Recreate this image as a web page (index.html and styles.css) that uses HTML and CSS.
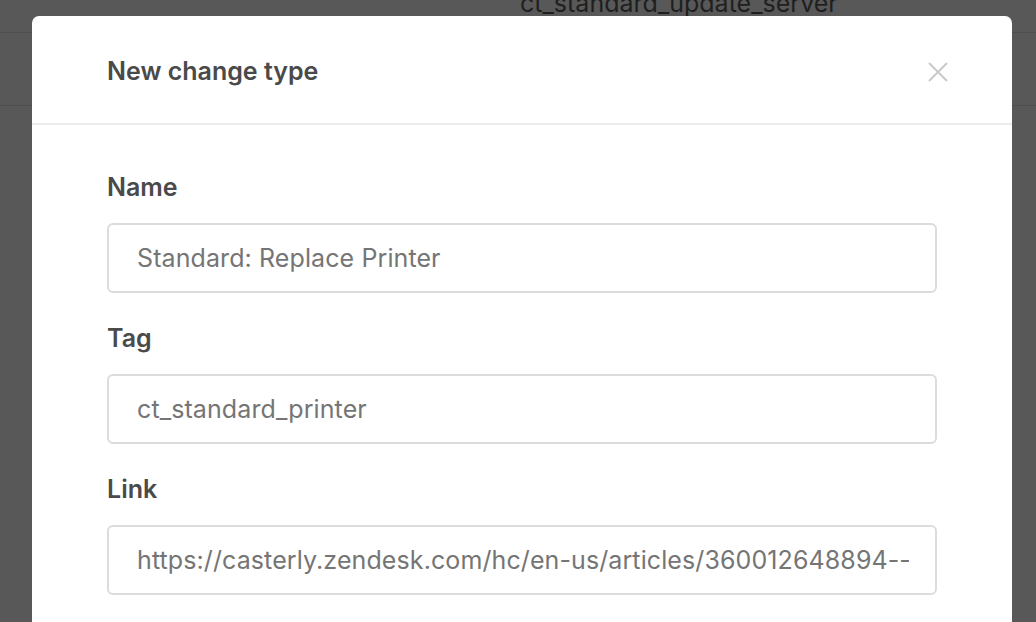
FILE: index.html
```html
<!DOCTYPE html>
<html>
<head>
<meta charset="utf-8">
<link rel="stylesheet" href="styles.css">
</head>
<body>
<div class="page">
  <div class="page-top"><span class="page-tag">ct_standard_update_server</span></div>
  <div class="page-row"></div>
</div>
<div class="modal">
  <div class="modal-header">
    <h2 class="modal-title">New change type</h2>
    <button class="modal-close" aria-label="Close">
      <svg width="20" height="20" viewBox="0 0 20 20"><path d="M1 1 L19 19 M19 1 L1 19" stroke="#c9c9c9" stroke-width="2" fill="none"/></svg>
    </button>
  </div>
  <div class="modal-body">
    <div class="field">
      <label class="field-label">Name</label>
      <div class="field-input"><span class="field-value">Standard: Replace Printer</span></div>
    </div>
    <div class="field">
      <label class="field-label">Tag</label>
      <div class="field-input"><span class="field-value">ct_standard_printer</span></div>
    </div>
    <div class="field">
      <label class="field-label">Link</label>
      <div class="field-input"><span class="field-value">https://casterly.zendesk.com/hc/en-us/articles/360012648894--Replace-Printer</span></div>
    </div>
  </div>
</div>
</body>
</html>
```
FILE: styles.css
```css
html, body {
  margin: 0;
  padding: 0;
  height: 100%;
  overflow: hidden;
}
body {
  background: #585858;
  font-family: Inter, "Liberation Sans", sans-serif;
}
.page-top {
  height: 32px;
  border-bottom: 1px solid #4e4e4e;
  display: flex;
  justify-content: flex-start;
  padding-left: 520px;
  overflow: hidden;
}
.page-tag {
  font-size: 25px;
  line-height: 14px;
  color: #1f1f1f;
  margin-top: -4px;
}
.page-row {
  height: 72px;
  border-bottom: 1px solid #4e4e4e;
}
.modal {
  position: fixed;
  left: 32px;
  top: 16px;
  width: 980px;
  bottom: -40px;
  background: #fff;
  border-radius: 7px;
}
.modal-header {
  border-bottom: 2px solid #ececec;
  display: flex;
  align-items: center;
  justify-content: space-between;
  padding: 2px 64px 0 75px;
  box-sizing: border-box;
  height: 109px;
}
.modal-title {
  margin: 0;
  font-size: 25px;
  font-weight: 600;
  color: #4a4a4a;
}
.modal-close {
  border: 0;
  background: none;
  padding: 2px 0 0 0;
  width: 20px;
  height: 22px;
  display: flex;
}
.modal-body {
  padding: 47px 75px 0 75px;
  display: flex;
  flex-direction: column;
  gap: 30px;
}
.field {
  display: flex;
  flex-direction: column;
  gap: 21px;
}
.field-label {
  font-size: 25px;
  line-height: 30px;
  font-weight: 600;
  color: #4a4a4a;
}
.field-input {
  height: 66px;
  border: 2px solid #dcdcdc;
  border-radius: 6px;
  padding: 0 26px 0 28px;
  display: flex;
  align-items: center;
  font-size: 25px;
  letter-spacing: 0.1px;
  color: #757575;
}
.field-value {
  flex: 1;
  min-width: 0;
  white-space: nowrap;
  overflow: hidden;
}
```
